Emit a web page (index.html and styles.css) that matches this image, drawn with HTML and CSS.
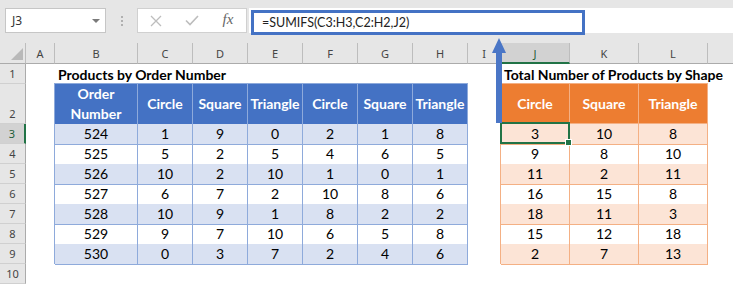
FILE: index.html
```html
<!DOCTYPE html>
<html lang="en">
<head>
    <meta charset="UTF-8">
    <title>SUMIFS by shape</title>
    <link rel="stylesheet" href="styles.css">
</head>
<body>

    <div class="toolbar">
        <div class="namebox"><span>J3</span><span class="caret"></span></div>
        <div class="grip"><i></i><i></i><i></i></div>
        <div class="fxbox">
            <span class="tool">
                <svg width="12" height="12" viewBox="0 0 12 12"><path d="M1 1 L11 11 M11 1 L1 11" stroke="#bdbdbd" stroke-width="1.3" fill="none"/></svg>
            </span>
            <span class="tool">
                <svg width="14" height="11" viewBox="0 0 14 11"><path d="M1 5.5 L5 9.5 L13 1" stroke="#bdbdbd" stroke-width="1.6" fill="none"/></svg>
            </span>
            <span class="tool fx">fx</span>
        </div>
        <div class="formula">
            <div class="formula-mark">=SUMIFS(C3:H3,C2:H2,J2)</div>
        </div>
    </div>

    <div class="sheet">
        <!-- column headers -->
        <div class="corner"><span class="corner-tri"></span></div>
        <div class="ch">A</div>
        <div class="ch">B</div>
        <div class="ch">C</div>
        <div class="ch">D</div>
        <div class="ch">E</div>
        <div class="ch">F</div>
        <div class="ch">G</div>
        <div class="ch">H</div>
        <div class="ch">I</div>
        <div class="ch sel">J</div>
        <div class="ch">K</div>
        <div class="ch">L</div>
        <div class="ch last"></div>

        <!-- row headers -->
        <div class="rh">1</div>
        <div class="rh">2</div>
        <div class="rh sel">3</div>
        <div class="rh">4</div>
        <div class="rh">5</div>
        <div class="rh">6</div>
        <div class="rh">7</div>
        <div class="rh">8</div>
        <div class="rh">9</div>
        <div class="rh">10</div>

        <div class="title title-left">Products by Order Number</div>
        <div class="tbl tbl-blue">
            <div class="tr head">
                <div>Order<br>Number</div><div>Circle</div><div>Square</div><div>Triangle</div><div>Circle</div><div>Square</div><div>Triangle</div>
            </div>
            <div class="tr band"><div>524</div><div>1</div><div>9</div><div>0</div><div>2</div><div>1</div><div>8</div></div>
            <div class="tr"><div>525</div><div>5</div><div>2</div><div>5</div><div>4</div><div>6</div><div>5</div></div>
            <div class="tr band"><div>526</div><div>10</div><div>2</div><div>10</div><div>1</div><div>0</div><div>1</div></div>
            <div class="tr"><div>527</div><div>6</div><div>7</div><div>2</div><div>10</div><div>8</div><div>6</div></div>
            <div class="tr band"><div>528</div><div>10</div><div>9</div><div>1</div><div>8</div><div>2</div><div>2</div></div>
            <div class="tr"><div>529</div><div>9</div><div>7</div><div>10</div><div>6</div><div>5</div><div>8</div></div>
            <div class="tr band"><div>530</div><div>0</div><div>3</div><div>7</div><div>2</div><div>4</div><div>6</div></div>
        </div>

        <div class="title title-right">Total Number of Products by Shape</div>
        <div class="tbl tbl-orange">
            <div class="tr head"><div>Circle</div><div>Square</div><div>Triangle</div></div>
            <div class="tr band"><div>3</div><div>10</div><div>8</div></div>
            <div class="tr"><div>9</div><div>8</div><div>10</div></div>
            <div class="tr band"><div>11</div><div>2</div><div>11</div></div>
            <div class="tr"><div>16</div><div>15</div><div>8</div></div>
            <div class="tr band"><div>18</div><div>11</div><div>3</div></div>
            <div class="tr"><div>15</div><div>12</div><div>18</div></div>
            <div class="tr band"><div>2</div><div>7</div><div>13</div></div>
        </div>

        <div class="selcell"><span class="handle"></span></div>
    </div>

    <!-- callout arrow from formula bar to the result column -->
    <svg class="arrow" width="18" height="90" viewBox="0 0 18 90">
        <rect x="6" y="14" width="6" height="73" fill="#4a76c6"/>
        <polygon points="2,17 9,2 16,17" fill="#4a76c6"/>
    </svg>

</body>
</html>
```

FILE: styles.css
```css
/* Page */
body {
    margin: 0;
    width: 733px;
    height: 284px;
    overflow: hidden;
    position: relative;
    background: #fff;
    font-family: Lato, "Liberation Sans", sans-serif;
    color: #000;
}

/* Formula bar */
.toolbar {
    height: 43px;
    box-sizing: border-box;
    padding: 8px 0 0 5px;
    background: #e6e6e6;
    display: flex;
    align-items: flex-start;
}

.namebox {
    width: 101px;
    height: 25px;
    box-sizing: border-box;
    border: 1px solid #c6c6c6;
    background: #fff;
    display: flex;
    align-items: center;
    justify-content: space-between;
    padding: 0 5px 0 6px;
    font-family: "Noto Sans", sans-serif;
    font-size: 12px;
    color: #333;
}

.caret {
    width: 0;
    height: 0;
    border-left: 4px solid transparent;
    border-right: 4px solid transparent;
    border-top: 4px solid #7a7a7a;
}

.grip {
    width: 31px;
    height: 25px;
    display: flex;
    flex-direction: column;
    align-items: center;
    justify-content: center;
    gap: 2px;
}

.grip i {
    width: 2px;
    height: 2px;
    background: #b0b0b0;
}

.fxbox {
    width: 110px;
    height: 25px;
    box-sizing: border-box;
    border: 1px solid #d0d0d0;
    background: #fff;
    display: grid;
    grid-template-columns: repeat(3, 1fr);
}

.tool {
    display: flex;
    align-items: center;
    justify-content: center;
}

.fx {
    font-family: "Liberation Serif", serif;
    font-style: italic;
    font-size: 15px;
    color: #666;
    padding-bottom: 2px;
}

.formula {
    flex: 1;
    height: 25px;
    margin-left: 2px;
    background: #fff;
}

.formula-mark {
    width: 334px;
    height: 25px;
    margin: 2px 0 0 2px;
    box-sizing: border-box;
    border: 3px solid #4472c4;
    padding: 2px 0 0 8px;
    font-size: 12.5px;
    color: #222;
    white-space: nowrap;
}

/* Sheet grid */
.sheet {
    display: grid;
    grid-template-columns: 26px 29px 83px repeat(6, 55px) 33px repeat(3, 69px) 1fr;
    grid-template-rows: 21px 20px 40px repeat(8, 20px);
}

.corner,
.ch {
    background: #e6e6e6;
    border-right: 1px solid #bdbdbd;
    border-bottom: 1px solid #ababab;
    box-sizing: border-box;
}

.corner {
    display: flex;
    justify-content: flex-end;
    align-items: flex-end;
    padding: 0 2px 3px 0;
}

.corner-tri {
    width: 0;
    height: 0;
    border-left: 12px solid transparent;
    border-bottom: 12px solid #b9b9b9;
}

.ch {
    display: flex;
    align-items: center;
    justify-content: center;
    font-family: "Noto Sans", sans-serif;
    font-size: 11px;
    color: #444;
    padding-top: 1px;
}

.ch.last {
    border-right: none;
}

.ch.sel {
    background: #d2d2d2;
    border-bottom: 2px solid #217346;
    color: #1e5e3a;
}

.rh {
    grid-column: 1;
    background: #e6e6e6;
    border-right: 1px solid #ababab;
    border-bottom: 1px solid #d0d0d0;
    box-sizing: border-box;
    display: flex;
    align-items: flex-end;
    justify-content: center;
    padding-bottom: 2px;
    font-family: "Noto Sans", sans-serif;
    font-size: 11px;
    color: #444;
}

.rh.sel {
    background: #d2d2d2;
    border-right: 2px solid #217346;
    color: #1e5e3a;
}

/* Sheet content */
.title {
    grid-row: 2;
    font-size: 14px;
    font-weight: 700;
    white-space: nowrap;
    display: flex;
    align-items: flex-end;
    padding: 0 0 1px 3px;
}

.title-left {
    grid-column: 3 / 10;
}

.title-right {
    grid-column: 11 / 15;
}

.tbl {
    grid-row: 3 / 11;
    margin: -1px 0 0 -1px;
    border-left: 1px solid;
    border-top: 1px solid;
    display: flex;
    flex-direction: column;
}

.tr {
    display: grid;
    height: 20px;
}

.tr.head {
    height: 40px;
    color: #fff;
    font-weight: 700;
}

.tr > div {
    border-right: 1px solid;
    border-bottom: 1px solid;
    display: flex;
    align-items: center;
    justify-content: center;
    text-align: center;
    font-size: 14px;
    line-height: 20px;
}

.tbl-blue {
    grid-column: 3 / 10;
    border-color: #8eaadb;
}

.tbl-blue .tr {
    grid-template-columns: 83px repeat(6, 55px);
}

.tbl-blue .tr > div {
    border-color: #8eaadb;
}

.tbl-blue .head {
    background: #4472c4;
}

.tbl-blue .band {
    background: #d9e1f2;
}

.tbl-orange {
    grid-column: 11 / 14;
    border-color: #f4b084;
}

.tbl-orange .tr {
    grid-template-columns: repeat(3, 69px);
}

.tbl-orange .tr > div {
    border-color: #f4b084;
}

.tbl-orange .head {
    background: #ed7d31;
}

.tbl-orange .band {
    background: #fce4d6;
}

/* Active cell J3 */
.selcell {
    grid-column: 11;
    grid-row: 4;
    margin: -2px 0 0 -1px;
    border: 2px solid #217346;
    position: relative;
}

.handle {
    position: absolute;
    right: -4px;
    bottom: -4px;
    width: 5px;
    height: 5px;
    background: #217346;
    border: 1px solid #fff;
}

/* Callout arrow */
.arrow {
    position: absolute;
    left: 490px;
    top: 36px;
}
```
